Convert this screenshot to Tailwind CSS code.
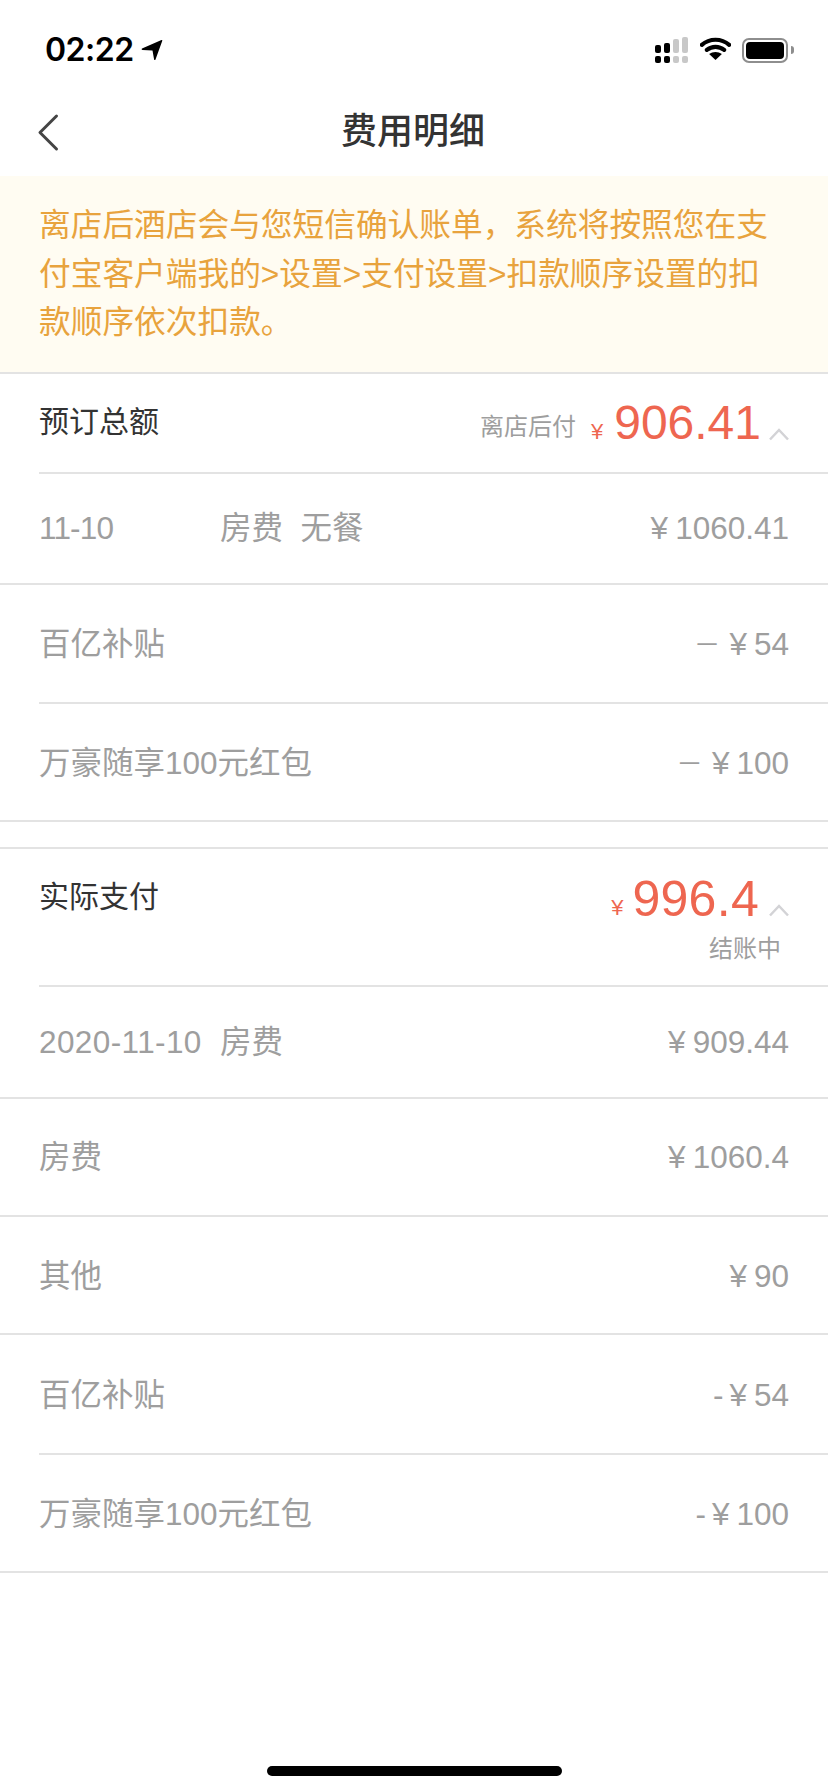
<!DOCTYPE html>
<html lang="zh-CN">
<head>
<meta charset="utf-8">
<script src="https://cdn.jsdelivr.net/npm/@tailwindcss/browser@4"></script>
</head>
<body class="bg-white">
<div class="w-[828px] h-[1792px] relative overflow-hidden bg-white font-['Liberation_Sans','Noto_Sans_CJK_SC',sans-serif] text-[31.5px] text-[#9e9e9e]">
  <!-- status bar -->
  <div class="h-[88px] flex items-start justify-between">
    <div class="flex items-center pl-[45px] pt-[30px] gap-[7px]">
      <span class="font-['Inter',sans-serif] text-[32px] leading-[40px] font-semibold text-black tracking-[-0.5px]">02:22</span>
      <svg width="22" height="22" viewBox="0 0 22 22"><path d="M1 9.500 20.500 1c.6-.2 1 .2.8.8L14.500 20.500c-.3.8-1.200.7-1.400-.1L11.500 11.500 1.500 11c-.9-.1-1.200-1.100-.5-1.500Z" fill="#000"/></svg>
    </div>
    <div class="flex items-center pt-[37px] pr-[34px]">
      <svg width="33" height="26" viewBox="0 0 33 26" class="mr-[12px]">
        <g fill="#000"><rect x="0" y="8" width="6" height="8" rx="2"/><rect x="0" y="19" width="6" height="7" rx="2"/><rect x="9" y="6" width="6" height="10" rx="2"/><rect x="9" y="19" width="6" height="7" rx="2"/></g>
        <g fill="#c8c8c8"><rect x="18" y="2" width="6" height="14" rx="2"/><rect x="18" y="19" width="6" height="7" rx="2"/><rect x="27" y="0" width="6" height="16" rx="2"/><rect x="27" y="19" width="6" height="7" rx="2"/></g>
      </svg>
      <svg width="31" height="24" viewBox="0 0 34 26" class="mr-[11px] mb-[2px]">
        <path d="M2 8.500C10.500 1 23.500 1 32 8.500M7.500 14C13 9.500 21 9.500 26.500 14" fill="none" stroke="#000" stroke-width="4.500" stroke-linecap="round"/>
        <path d="M17 25 10 18.500c4-3 10-3 14 0Z" fill="#000"/>
      </svg>
      <div class="flex items-center">
        <div class="w-[46px] h-[25px] rounded-[7px] border-2 border-[#8e8e8e] p-[2px]"><div class="w-full h-full bg-black rounded-[4px]"></div></div>
        <div class="w-[3px] h-[8px] ml-[3px] bg-[#8e8e8e] rounded-r-[3px]"></div>
      </div>
    </div>
  </div>
  <!-- nav -->
  <div class="h-[88px] relative flex items-center justify-center pr-[2px]">
    <svg width="24" height="40" viewBox="0 0 24 40" class="absolute left-[37px] top-[25px]"><path d="M19.500 3 3 19.500 19.500 36" fill="none" stroke="#444" stroke-width="3" stroke-linecap="round" stroke-linejoin="round"/></svg>
    <span class="text-[36px] font-medium text-[#333]">费用明细</span>
  </div>
  <!-- notice -->
  <div class="h-[196px] bg-[#fffcf2] px-[39px] pt-[25px] text-[31.7px] leading-[48.500px] text-[#e8a33d]">离店后酒店会与您短信确认账单，系统将按照您在支付宝客户端我的&gt;设置&gt;支付设置&gt;扣款顺序设置的扣款顺序依次扣款。</div>

  <!-- section 1 -->
  <div class="border-t-2 border-[#e3e3e3]">
    <div class="ml-[39px] h-[100px] border-b-2 border-[#e3e3e3] flex items-start justify-between pr-[39px]">
      <span class="text-[30px] text-[#333] leading-[42px] pt-[27px]">预订总额</span>
      <div class="flex items-end h-[72px] mt-[6px]">
        <span class="text-[24px] leading-[34px] mb-[8px]">离店后付</span>
        <span class="text-[#ee6650] text-[22px] leading-[24px] ml-[15px] mb-[8px]">¥</span>
        <span class="text-[#ee6650] text-[48px] leading-[54px] ml-[11px] mb-[2px]">906.41</span>
        <svg width="20" height="14" viewBox="0 0 20 14" class="ml-[8px] mb-[11px]"><path d="M1 12.500 10 3l9 9.500" fill="none" stroke="#d3d3d6" stroke-width="2.500"/></svg>
      </div>
    </div>
    <div class="h-[111px] border-b-2 border-[#e3e3e3] pl-[39px] pr-[39px] flex items-center justify-between">
      <div class="flex"><span class="w-[181px] tracking-[-0.8px]">11-10</span><span>房费&nbsp;&nbsp;无餐</span></div><span><span class="mr-[7px]">¥</span>1060.41</span>
    </div>
    <div class="ml-[39px] h-[119px] border-b-2 border-[#e3e3e3] pr-[39px] pt-[3px] flex items-center justify-between"><span>百亿补贴</span><span class="flex items-center"><span class="text-[21px] mr-[12px]">一</span><span class="mr-[7px]">¥</span>54</span></div>
    <div class="h-[118px] border-b-2 border-[#e3e3e3] pl-[39px] pr-[39px] pt-[4px] flex items-center justify-between"><span>万豪随享100元红包</span><span class="flex items-center"><span class="text-[21px] mr-[12px]">一</span><span class="mr-[7px]">¥</span>100</span></div>
  </div>

  <!-- section 2 -->
  <div class="mt-[25px] border-t-2 border-[#e3e3e3]">
    <div class="ml-[39px] h-[138px] border-b-2 border-[#e3e3e3] flex items-start justify-between pr-[39px]">
      <span class="text-[30px] text-[#333] leading-[42px] pt-[27px]">实际支付</span>
      <div class="flex flex-col items-end">
        <div class="flex items-end h-[72px] mt-[7px]">
          <span class="text-[#ee6650] text-[22px] leading-[24px] mb-[8px]">¥</span>
          <span class="text-[#ee6650] text-[50px] leading-[54px] tracking-[0.3px] ml-[9px] mb-[2px]">996.4</span>
          <svg width="20" height="14" viewBox="0 0 20 14" class="ml-[10px] mb-[11px]"><path d="M1 12.500 10 3l9 9.500" fill="none" stroke="#d3d3d6" stroke-width="2.500"/></svg>
        </div>
        <span class="text-[24px] leading-[34px] mr-[8px] mt-[4px]">结账中</span>
      </div>
    </div>
    <div class="h-[112px] border-b-2 border-[#e3e3e3] pl-[39px] pr-[39px] pt-[2px] flex items-center justify-between"><div class="flex"><span class="w-[181px] tracking-[0.4px]">2020-11-10</span><span>房费</span></div><span><span class="mr-[7px]">¥</span>909.44</span></div>
    <div class="h-[118px] border-b-2 border-[#e3e3e3] pl-[39px] pr-[39px] pt-[2px] flex items-center justify-between"><span>房费</span><span><span class="mr-[7px]">¥</span>1060.4</span></div>
    <div class="h-[118px] border-b-2 border-[#e3e3e3] pl-[39px] pr-[39px] pt-[4px] flex items-center justify-between"><span>其他</span><span><span class="mr-[7px]">¥</span>90</span></div>
    <div class="ml-[39px] h-[120px] border-b-2 border-[#e3e3e3] pr-[39px] pt-[3px] flex items-center justify-between"><span>百亿补贴</span><span><span class="mr-[6px]">-</span><span class="mr-[7px]">¥</span>54</span></div>
    <div class="h-[118px] border-b-2 border-[#e3e3e3] pl-[39px] pr-[39px] pt-[3px] flex items-center justify-between"><span>万豪随享100元红包</span><span><span class="mr-[6px]">-</span><span class="mr-[7px]">¥</span>100</span></div>
  </div>

  <!-- home indicator -->
  <div class="absolute left-[267px] top-[1766px] w-[295px] h-[10px] rounded-full bg-black"></div>
</div>
</body>
</html>
